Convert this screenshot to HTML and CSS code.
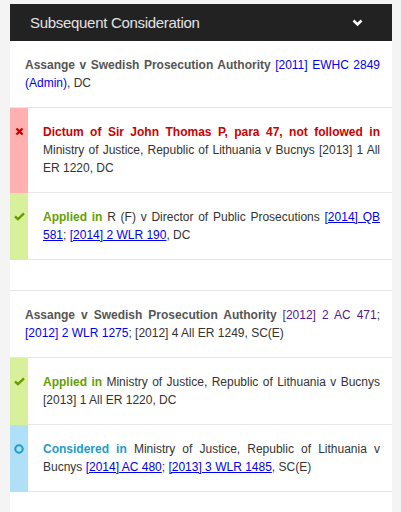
FILE: index.html
```html
<!DOCTYPE html>
<html lang="en">
<head>
    <meta charset="UTF-8">
    <meta name="viewport" content="width=device-width, initial-scale=1.0">
    <title>Subsequent Consideration</title>
    <link rel="stylesheet" href="styles.css">
</head>
<body>

<div class="panel">
    <div class="panel-head">
        <span>Subsequent Consideration</span>
        <svg class="chevron" width="11" height="8" viewBox="0 0 11 8">
            <polyline points="1.5,1.5 5.5,5.5 9.5,1.5" fill="none" stroke="#fff" stroke-width="2.6"/>
        </svg>
    </div>

    <div class="case">
        <div class="case-title">
            <b>Assange v Swedish Prosecution Authority</b> <a href="#">[2011] EWHC 2849 (Admin)</a>, DC
        </div>
        <div class="entry negative">
            <div class="flag">
                <svg width="9" height="9" viewBox="0 0 9 9">
                    <path d="M1.5 1.5 L7.5 7.5 M7.5 1.5 L1.5 7.5" stroke="#cc0000" stroke-width="2.4"/>
                </svg>
            </div>
            <p><b>Dictum of Sir John Thomas P, para 47, not followed in</b> Ministry of Justice, Republic of Lithuania v Bucnys [2013] 1 All ER 1220, DC</p>
        </div>
        <div class="entry positive">
            <div class="flag">
                <svg width="11" height="9" viewBox="0 0 11 9">
                    <polyline points="1,4.5 4,7.2 10,1.3" fill="none" stroke="#669c00" stroke-width="2.4"/>
                </svg>
            </div>
            <p><b>Applied in</b> R (F) v Director of Public Prosecutions <a class="ref" href="#">[2014] QB 581</a>; <a class="ref" href="#">[2014] 2 WLR 190</a>, DC</p>
        </div>
    </div>

    <div class="case">
        <div class="case-title">
            <b>Assange v Swedish Prosecution Authority</b> <a class="visited" href="#">[2012] 2 AC 471</a>; <a href="#">[2012] 2 WLR 1275</a>; [2012] 4 All ER 1249, SC(E)
        </div>
        <div class="entry positive">
            <div class="flag">
                <svg width="11" height="9" viewBox="0 0 11 9">
                    <polyline points="1,4.5 4,7.2 10,1.3" fill="none" stroke="#669c00" stroke-width="2.4"/>
                </svg>
            </div>
            <p><b>Applied in</b> Ministry of Justice, Republic of Lithuania v Bucnys [2013] 1 All ER 1220, DC</p>
        </div>
        <div class="entry neutral">
            <div class="flag">
                <svg width="10" height="10" viewBox="0 0 10 10">
                    <circle cx="5" cy="5" r="3.7" fill="none" stroke="#1b9ccc" stroke-width="2"/>
                </svg>
            </div>
            <p><b>Considered in</b> Ministry of Justice, Republic of Lithuania v Bucnys <a class="ref" href="#">[2014] AC 480</a>; <a class="ref" href="#">[2013] 3 WLR 1485</a>, SC(E)</p>
        </div>
    </div>
</div>

</body>
</html>
```

FILE: styles.css
```css
body {
    margin: 4px 9px 0 10px;
    background-color: #f4f4f4;
    font-family: "Liberation Sans", Arial, sans-serif;
    font-size: 12px;
    line-height: 18px;
    color: #333;
}

.panel {
    background-color: #fff;
    min-height: 520px;
}

.panel-head {
    height: 37px;
    background-color: #222;
    color: #e2e2e2;
    display: flex;
    align-items: center;
    justify-content: space-between;
    padding: 0 29px 0 20px;
    font-size: 15px;
    letter-spacing: -0.3px;
}

.chevron {
    display: block;
    margin-top: 1px;
}

.case {
    border-bottom: 1px solid #e6e6e6;
    padding-bottom: 30px;
}

.case-title {
    padding: 15px 12px 15px 15px;
    border-bottom: 1px solid #e6e6e6;
    text-align: justify;
}

.case-title b {
    color: #555;
}

a {
    color: #0000ee;
    text-decoration: none;
}

a.visited {
    color: #551a8b;
}

a.ref {
    text-decoration: underline;
}

.entry {
    display: flex;
}

.flag {
    width: 18px;
    flex-shrink: 0;
    padding-top: 15px;
    display: flex;
    justify-content: center;
    align-items: flex-start;
}

.flag svg {
    display: block;
    margin-top: 4px;
}

.entry p {
    flex: 1;
    margin: 0;
    padding: 15px 12px 15px 15px;
    border-bottom: 1px solid #e6e6e6;
    text-align: justify;
}

.negative .flag {
    background-color: #ffb0b0;
}

.negative b {
    color: #cc0000;
}

.positive .flag {
    background-color: #d8f09c;
}

.positive b {
    color: #66a000;
}

.neutral .flag {
    background-color: #b0e0f8;
}

.neutral b {
    color: #1b9ccc;
}
```
